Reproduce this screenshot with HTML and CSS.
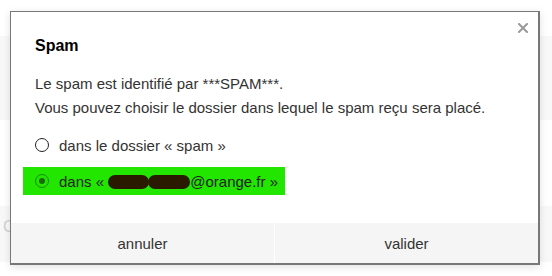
FILE: index.html
```html
<!DOCTYPE html>
<html lang="fr">
<head>
<meta charset="utf-8">
<link rel="stylesheet" href="styles.css">
</head>
<body>
<div class="page">
  <div class="band band-top"></div>
  <div class="band band-bottom"><span class="ghost">C</span></div>
</div>
<div class="dialog">
  <button class="close" aria-label="fermer">
    <svg width="10" height="10" viewBox="0 0 10 10"><path d="M1 1L9 9M9 1L1 9" stroke="#9a9a9a" stroke-width="2" stroke-linecap="square"/></svg>
  </button>
  <div class="body">
    <h2 class="title">Spam</h2>
    <p class="desc">Le spam est identifié par ***SPAM***.<br>Vous pouvez choisir le dossier dans lequel le spam reçu sera placé.</p>
    <div class="options">
      <label class="opt"><span class="radio"></span><span>dans le dossier « spam »</span></label>
      <label class="opt opt-sel"><span class="radio checked"></span><span>dans « <span class="blob b1"></span><span class="blob b2"></span>@orange.fr »</span></label>
    </div>
  </div>
  <div class="footer">
    <button class="btn">annuler</button>
    <button class="btn">valider</button>
  </div>
</div>
</body>
</html>
```
FILE: styles.css
```css
* { box-sizing: border-box; }
html, body { margin: 0; padding: 0; }
body {
  width: 552px; height: 276px; overflow: hidden;
  background: #fff;
  font-family: "Liberation Sans", Arial, sans-serif;
  position: relative;
}
.page { position: absolute; inset: 0; }
.band { position: absolute; left: 0; width: 552px; background: #f8f8f8; }
.band-top { top: 36px; height: 84px; }
.band-bottom { top: 206px; height: 56px; }
.ghost { position: absolute; left: 3px; top: 12px; font-size: 16px; color: #d0d0d0; }
.dialog {
  position: absolute; left: 10px; top: 11px;
  width: 530px; height: 254px;
  background: #fff;
  border: 2px solid #777;
  border-width: 1px 2px 2px 1px;
  box-shadow: 0 2px 8px rgba(0,0,0,0.12);
  display: flex; flex-direction: column;
}
.close {
  position: absolute; right: 8px; top: 9px;
  width: 14px; height: 14px; padding: 0; border: 0; background: none;
  display: flex; align-items: center; justify-content: center;
}
.body { flex: 1; padding: 24px 0 0 24px; }
.title { margin: 0; font-size: 16px; font-weight: bold; color: #000; line-height: 20px; }
.desc { margin: 16px 0 0; font-size: 15px; line-height: 24px; color: #333; }
.options { margin-top: 11px; margin-left: -12px; }
.opt { display: flex; align-items: center; height: 28px; padding-left: 12px; font-size: 15px; color: #333; width: 262px; }
.opt + .opt { margin-top: 8px; }
.opt-sel { background: #22e600; color: #222; }
.radio {
  width: 14px; height: 14px; border-radius: 50%;
  border: 1.5px solid #222; background: #fff; margin-right: 10px; flex: none;
  display: flex; align-items: center; justify-content: center;
}
.radio.checked { border: 1px solid #1a8a00; background: transparent; }
.radio.checked::after { content: ""; width: 6px; height: 6px; border-radius: 50%; background: #1a6a00; }
.blob { display: inline-block; height: 14px; background: #2a1a00; border-radius: 7px; vertical-align: -2px; }
.b1 { width: 41px; }
.b2 { width: 42px; margin-left: -1px; }
.footer { height: 40px; display: flex; gap: 1px; background: #fff; }
.btn {
  flex: 1; border: 0; background: #f5f5f5; padding: 0;
  font-family: "Liberation Sans", Arial, sans-serif; font-size: 15px; color: #333;
}
```
